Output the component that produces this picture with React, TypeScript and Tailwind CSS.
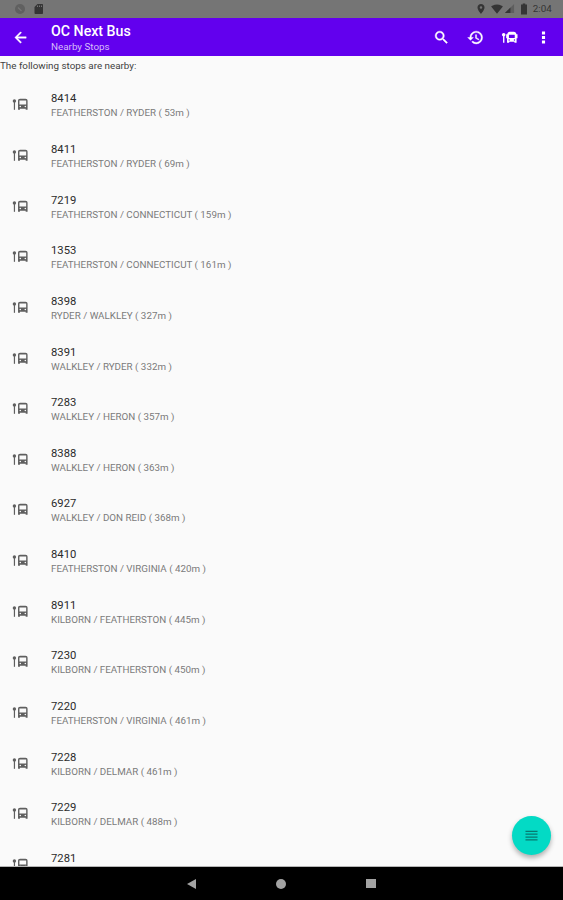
import type { ReactNode } from "react";

const stops = [
  { id: "8414", label: "FEATHERSTON / RYDER ( 53m )" },
  { id: "8411", label: "FEATHERSTON / RYDER ( 69m )" },
  { id: "7219", label: "FEATHERSTON / CONNECTICUT ( 159m )" },
  { id: "1353", label: "FEATHERSTON / CONNECTICUT ( 161m )" },
  { id: "8398", label: "RYDER / WALKLEY ( 327m )" },
  { id: "8391", label: "WALKLEY / RYDER ( 332m )" },
  { id: "7283", label: "WALKLEY / HERON ( 357m )" },
  { id: "8388", label: "WALKLEY / HERON ( 363m )" },
  { id: "6927", label: "WALKLEY / DON REID ( 368m )" },
  { id: "8410", label: "FEATHERSTON / VIRGINIA ( 420m )" },
  { id: "8911", label: "KILBORN / FEATHERSTON ( 445m )" },
  { id: "7230", label: "KILBORN / FEATHERSTON ( 450m )" },
  { id: "7220", label: "FEATHERSTON / VIRGINIA ( 461m )" },
  { id: "7228", label: "KILBORN / DELMAR ( 461m )" },
  { id: "7229", label: "KILBORN / DELMAR ( 488m )" },
  { id: "7281", label: "" },
];

const Icon = ({ className, children }: { className: string; children: ReactNode }) => (
  <svg viewBox="0 0 24 24" fill="currentColor" className={`shrink-0 ${className}`}>
    {children}
  </svg>
);

const StopIcon = ({ className }: { className: string }) => (
  <Icon className={className}>
    <circle cx="3.4" cy="7" r="2.400" />
    <path d="M2.600 7h1.700v12.500H2.600z" />
    <path
      fillRule="evenodd"
      d="M11.500 4h7.500c2 0 3 1.200 3 3v12.500h-2.700V18h-8.100v1.500H8.500V7c0-1.800 1-3 3-3zM10.500 6.300v5.700h9.500V6.300zM11.700 13.800a1.100 1.100 0 1 0 0 2.200 1.100 1.100 0 0 0 0-2.200zM18.800 13.800a1.100 1.100 0 1 0 0 2.200 1.100 1.100 0 0 0 0-2.200z"
    />
  </Icon>
);

// Heavier variant with mirrors, used in the app bar
const NearbyIcon = ({ className }: { className: string }) => (
  <Icon className={className}>
    <circle cx="3.800" cy="8" r="2.500" />
    <path d="M2.900 8h1.900v11.500H2.900z" />
    <path
      fillRule="evenodd"
      d="M12.500 4h5.500c2.200 0 3.500 1.400 3.800 3.500h1.500V13h-1.300v6.500h-3V18h-7.500v1.500h-3V13H7.300V7.500h1.500C9.100 5.400 10.300 4 12.500 4zM11.200 8v4.700h8.200V8zM11.500 14.500a1 1 0 1 0 0 2 1 1 0 0 0 0-2zM19 14.500a1 1 0 1 0 0 2 1 1 0 0 0 0-2z"
    />
  </Icon>
);

const StatusBar = () => (
  <div className="flex h-[17.700px] shrink-0 items-center justify-between bg-[#757575] pl-[14px] pr-[11px] text-[#353535]">
    <div className="flex items-center gap-[7px]">
      <Icon className="h-[12px] w-[12px] text-[#606060]">
        <circle cx="12" cy="12" r="10" />
        <path d="M8 9l7 7" stroke="#757575" strokeWidth="2.500" />
      </Icon>
      <Icon className="h-[12px] w-[12px]">
        <path d="M9 2h9c1.100 0 2 .9 2 2v16c0 1.100-.9 2-2 2H5c-1.100 0-2-.9-2-2V8zM8 5v3h2V5zm4 0v3h2V5zm4 0v3h2V5z" />
      </Icon>
    </div>
    <div className="flex items-center">
      <Icon className="mr-[4px] h-[12px] w-[12px]">
        <path d="M12 2C8 2 5 5 5 9c0 5 7 13 7 13s7-8 7-13c0-4-3-7-7-7zm0 4.500a2.500 2.500 0 1 1 0 5 2.500 2.500 0 0 1 0-5z" />
      </Icon>
      <Icon className="h-[12px] w-[12px]">
        <path d="M12 21.500L.3 7C.8 6.600 5.200 3 12 3s11.200 3.600 11.700 4z" />
      </Icon>
      <Icon className="ml-[1px] h-[11px] w-[11px]">
        <path d="M22 2L2 22h20z" opacity=".35" />
        <path d="M14 10L2 22h12z" />
      </Icon>
      <Icon className="ml-[3px] h-[12px] w-[12px]">
        <path d="M9.500 1h5v2H18v20H6V3h3.500z" />
      </Icon>
      <span className="ml-[3px] text-[9.840px] leading-none tracking-[0.1px]">2:04</span>
    </div>
  </div>
);

const AppBar = () => (
  <header className="flex h-[38.800px] shrink-0 items-center bg-[#6200ee] pl-[12px] pr-[11px] text-white">
    <Icon className="h-[17px] w-[17px]">
      <path d="M20 11H7.830l5.590-5.590L12 4l-8 8 8 8 1.410-1.410L7.830 13H20z" stroke="currentColor" strokeWidth=".6" />
    </Icon>
    <div className="ml-[22px] pt-[2px]">
      <h1 className="text-[14.200px] font-medium leading-[17px]">OC Next Bus</h1>
      <p className="text-[9.840px] leading-[13px] text-[#d6bdfa]">Nearby Stops</p>
    </div>
    <div className="ml-auto flex items-center gap-[17px]">
      <Icon className="h-[17px] w-[17px]">
        <path
          stroke="currentColor"
          strokeWidth=".6"
          d="M15.500 14h-.79l-.28-.27A6.471 6.471 0 0 0 16 9.500 6.500 6.500 0 1 0 9.500 16c1.610 0 3.090-.59 4.230-1.570l.27.28v.79l5 4.990L20.490 19zm-6 0C7.010 14 5 11.990 5 9.500S7.010 5 9.500 5 14 7.010 14 9.500 11.990 14 9.500 14z"
        />
      </Icon>
      <Icon className="h-[17px] w-[17px]">
        <path
          stroke="currentColor"
          strokeWidth=".6"
          d="M13 3a9 9 0 0 0-9 9H1l3.890 3.890.07.14L9 12H6c0-3.870 3.130-7 7-7s7 3.130 7 7-3.130 7-7 7c-1.930 0-3.680-.79-4.940-2.060l-1.420 1.420A8.954 8.954 0 0 0 13 21a9 9 0 0 0 0-18zm-1 5v5l4.280 2.540.72-1.210-3.500-2.080V8z"
        />
      </Icon>
      <NearbyIcon className="h-[17px] w-[17px]" />
      <Icon className="h-[17px] w-[17px]">
        <path d="M9.800 3.500h4.400v4.400H9.800zM9.800 9.800h4.400v4.400H9.800zM9.800 16.100h4.400v4.400H9.800z" />
      </Icon>
    </div>
  </header>
);

const NavigationBar = () => (
  <nav className="flex h-[33px] shrink-0 items-center justify-center gap-[80px] bg-black text-[#a3a3a3]">
    <svg viewBox="0 0 10 10" preserveAspectRatio="none" fill="currentColor" className="h-[10px] w-[9px]">
      <path d="M10 0v10L0 5z" />
    </svg>
    <span className="h-[10px] w-[10px] rounded-full bg-[#a3a3a3]" />
    <span className="h-[9px] w-[10px] bg-[#a3a3a3]" />
  </nav>
);

const App = () => (
  <div className="flex h-[900px] w-[563px] flex-col overflow-hidden bg-[#fafafa] font-['Roboto',sans-serif]">
    <StatusBar />
    <AppBar />
    <main className="relative min-h-0 flex-1 overflow-hidden border-b border-[#b5b5b5]">
      <p className="h-[23px] pt-[4px] text-[9.840px] leading-[12px] text-[#3f3f3f]">The following stops are nearby:</p>
      <ul>
        {stops.map((stop) => (
          <li key={stop.id} className="flex h-[50.630px] items-start pl-[12px]">
            <StopIcon className="mt-[17px] h-[17px] w-[17px] text-[#5f5f5f]" />
            <div className="ml-[22px] pt-[12px]">
              <p className="text-[11.250px] leading-[15px] text-[#2b2b2b]">{stop.id}</p>
              {stop.label && <p className="text-[9.800px] leading-[14px] text-[#7b7b7b]">{stop.label}</p>}
            </div>
          </li>
        ))}
      </ul>
      <button
        aria-label="Menu"
        className="absolute bottom-[11px] right-[12px] flex h-[39px] w-[39px] items-center justify-center rounded-full bg-[#03dac5] text-[#077a70] shadow-[0_3px_5px_rgba(0,0,0,0.3)]"
      >
        <Icon className="h-[17px] w-[17px]">
          <path d="M3.500 5.300h17v1.800h-17zM3.500 9.300h17v1.800h-17zM3.500 13.300h17v1.800h-17zM3.500 17.300h17v1.800h-17z" />
        </Icon>
      </button>
    </main>
    <NavigationBar />
  </div>
);

export default App;
